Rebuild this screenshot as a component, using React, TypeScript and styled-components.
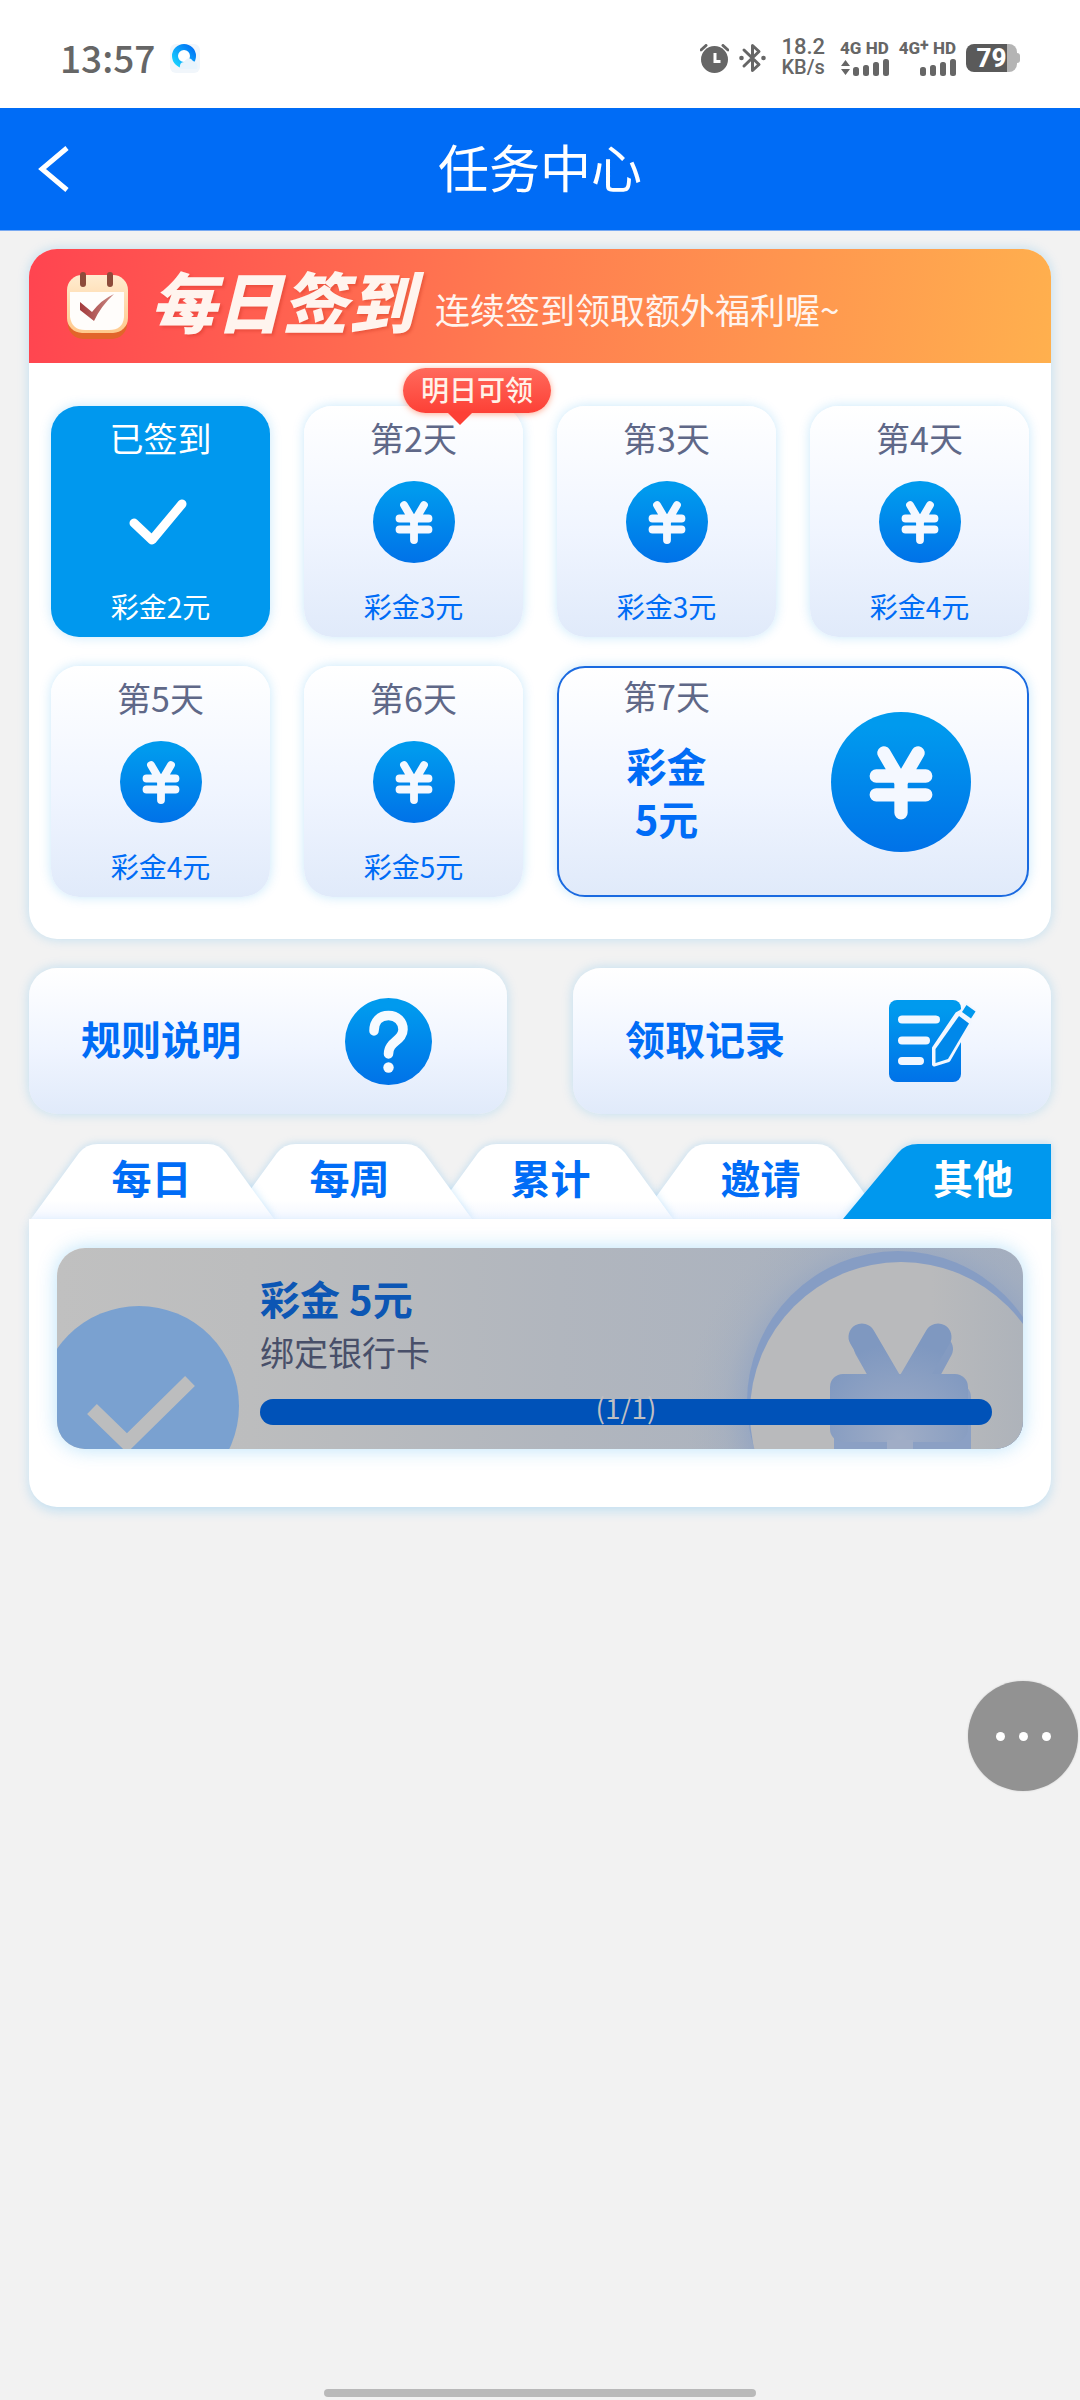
import React from "react";
import styled, { createGlobalStyle } from "styled-components";

const GlobalStyle = createGlobalStyle`
  * { box-sizing: border-box; }
  body {
    margin: 0;
    background: #f2f2f2;
    font-family: "Noto Sans CJK SC", "Noto Sans", sans-serif;
  }
  button {
    margin: 0;
    padding: 0;
    border: 0;
    background: none;
    font: inherit;
    color: inherit;
    cursor: pointer;
  }
  ul { list-style: none; margin: 0; padding: 0; }
  h1, h2, p { margin: 0; font-weight: 400; }
  svg { display: block; flex: none; }
`;

const BLUE = "#006cf6";
const SKY = "#0098ee";
const GLOW = "0 0 12px rgba(0, 152, 238, 0.22)";
const SOFT_FILL = "linear-gradient(180deg, #ffffff 0%, #f0f5ff 55%, #e0eafa 100%)";

const Page = styled.div`
  min-height: 100vh;
  display: flex;
  flex-direction: column;
`;

/* ---------- status bar ---------- */

const StatusBar = styled.div`
  height: 108px;
  padding: 8px 63px 0 60px;
  display: flex;
  align-items: center;
  justify-content: space-between;
  background: #ffffff;
  color: #666666;
`;

const StatusGroup = styled.div<{ $gap: number }>`
  display: flex;
  align-items: center;
  gap: ${(p) => p.$gap}px;
`;

const Clock = styled.span`
  font-size: 37px;
  line-height: 40px;
  padding-bottom: 2px;
  font-weight: 500;
`;

const Speed = styled.span`
  display: flex;
  flex-direction: column;
  padding: 0 5px 2px 5px;
  font-family: Roboto, "Noto Sans", sans-serif;
  font-size: 20px;
  line-height: 20px;
  font-weight: 500;
`;

const SpeedValue = styled.span`
  font-size: 22px;
`;

const Network = styled.span`
  display: flex;
  flex-direction: column;
  align-items: flex-end;
  gap: 2px;
  padding-bottom: 2px;
  font-family: Roboto, "Noto Sans", sans-serif;
  font-size: 17px;
  line-height: 18px;
  font-weight: 800;
`;

const Plus = styled.sup`
  font-size: 16px;
  line-height: 0;
  vertical-align: 4px;
`;

const Battery = styled.span`
  position: relative;
  display: flex;
  align-items: center;
  justify-content: center;
  width: 51px;
  height: 28px;
  border-radius: 8px;
  background: linear-gradient(90deg, #5a5a5a 0 80%, #b4b4b4 80%);
  color: #ffffff;
  font-family: Roboto, "Noto Sans", sans-serif;
  font-size: 26px;
  line-height: 28px;
  font-weight: 800;

  &::after {
    content: "";
    position: absolute;
    right: -3px;
    top: 9px;
    width: 4px;
    height: 10px;
    border-radius: 0 3px 3px 0;
    background: #b4b4b4;
  }
`;

/* ---------- header ---------- */

const Header = styled.header`
  height: 123px;
  padding: 0 36px;
  display: grid;
  grid-template-columns: 1fr auto 1fr;
  align-items: center;
  border-bottom: 1px solid #78a9f2;
  background: ${BLUE};
  color: #ffffff;
`;

const BackButton = styled.button`
  justify-self: start;
`;

const Title = styled.h1`
  font-size: 51px;
  line-height: 116px;
  padding-bottom: 6px;
`;

/* ---------- content ---------- */

const Main = styled.main`
  display: flex;
  flex-direction: column;
  gap: 29px;
  padding: 18px 29px;
`;

const Card = styled.section`
  border-radius: 28px;
  background: #ffffff;
  box-shadow: ${GLOW};
`;

const Banner = styled.div`
  display: flex;
  align-items: flex-end;
  padding: 10px 38px 24px;
  border-radius: 28px 28px 0 0;
  background: linear-gradient(98deg, #ff4450 0%, #ff7c50 48%, #ffb04e 100%);
  color: #fff4ee;
`;

const BannerTitle = styled.h2`
  margin: 0 21px 0 22px;
  font-size: 66px;
  line-height: 80px;
  font-weight: 900;
  font-style: italic;
  text-shadow: 2px 2px 3px rgba(190, 40, 20, 0.3);
  white-space: nowrap;
`;

const BannerText = styled.p`
  font-size: 35px;
  line-height: 60px;
  white-space: nowrap;
`;

const DayGrid = styled.ul`
  && {
    display: grid;
    grid-template-columns: repeat(4, minmax(0, 1fr));
    gap: 29px 34px;
    padding: 43px 22px 42px;
  }
`;

const DayTile = styled.li<{ $done?: boolean }>`
  position: relative;
  display: flex;
  flex-direction: column;
  align-items: center;
  gap: 22px;
  padding: 11px 0 10px;
  border-radius: 28px;
  background: ${(p) => (p.$done ? SKY : SOFT_FILL)};
  box-shadow: ${GLOW};
  color: ${(p) => (p.$done ? "#ffffff" : BLUE)};
`;

const DayLabel = styled.span<{ $done?: boolean }>`
  font-size: 34px;
  line-height: 42px;
  color: ${(p) => (p.$done ? "#ffffff" : "#5f6888")};
`;

const DayReward = styled.span`
  font-size: 28px;
  line-height: 42px;
`;

const FinalTile = styled.li`
  grid-column: span 2;
  display: grid;
  grid-template-columns: 215px 1fr;
  border: 2px solid #1a6ae0;
  border-radius: 28px;
  background: ${SOFT_FILL};
  box-shadow: ${GLOW};
`;

const FinalText = styled.div`
  display: flex;
  flex-direction: column;
  align-items: center;
  gap: 22px;
  padding-top: 7px;
`;

const FinalReward = styled.span`
  display: flex;
  flex-direction: column;
  align-items: center;
  font-size: 40px;
  line-height: 53px;
  font-weight: 700;
  color: ${BLUE};
`;

const FinalCoin = styled.div`
  display: flex;
  align-items: center;
  justify-content: center;
`;

const Bubble = styled.span`
  position: absolute;
  top: -38px;
  right: -28px;
  padding: 0 18px 3px;
  border-radius: 23px;
  background: linear-gradient(180deg, #ff6a5c, #fd4036);
  box-shadow: 0 1px 6px rgba(255, 90, 40, 0.5);
  color: #fff2e8;
  font-size: 28px;
  line-height: 42px;
  font-weight: 500;
  white-space: nowrap;

  &::after {
    content: "";
    position: absolute;
    left: 44px;
    top: 44px;
    border: 13px solid transparent;
    border-top-color: #fd4036;
    border-bottom-width: 0;
  }
`;

const Actions = styled.div`
  display: grid;
  grid-template-columns: 1fr 1fr;
  gap: 66px;
`;

const ActionButton = styled.button`
  height: 146px;
  display: flex;
  align-items: center;
  justify-content: space-between;
  padding: 0 75px 0 52px;
  border-radius: 28px;
  background: ${SOFT_FILL};
  box-shadow: ${GLOW};
  color: ${BLUE};
  font-size: 40px;
  line-height: 48px;
  font-weight: 700;
`;

const ActionLabel = styled.span`
  padding-bottom: 6px;
`;

/* ---------- tabs ---------- */

const TaskSection = styled.section`
  display: flex;
  flex-direction: column;
  padding-top: 1px;
`;

const TabList = styled.div`
  display: grid;
  grid-template-columns:
    minmax(0, 198fr) minmax(0, 201fr) minmax(0, 210fr)
    minmax(0, 205fr) minmax(0, 208fr);
`;

const Tab = styled.button<{ $order: number; $active?: boolean }>`
  position: relative;
  z-index: ${(p) => p.$order};
  width: ${(p) => (p.$active ? "100%" : "245px")};
  height: 75px;
  padding: 0 0 9px ${(p) => (p.$active ? 52 : 0)}px;
  font-size: 40px;
  line-height: 64px;
  font-weight: 700;
  text-align: center;
  white-space: nowrap;
  color: ${(p) => (p.$active ? "#ffffff" : BLUE)};
`;

const TabShape = styled.svg`
  position: absolute;
  inset: 0;
  width: 100%;
  height: 100%;
  z-index: -1;
  overflow: visible;
  filter: drop-shadow(0 0 4px rgba(0, 140, 238, 0.22));
`;

const TaskPanel = styled.div`
  position: relative;
  z-index: 8;
  padding: 29px 28px 58px;
  border-radius: 0 0 28px 28px;
  background: #ffffff;
  box-shadow: 0 4px 12px rgba(0, 152, 238, 0.2);
`;

const TaskCard = styled.article`
  position: relative;
  overflow: hidden;
  padding: 26px 31px 24px 203px;
  border-radius: 28px;
  background: linear-gradient(90deg, #c0c0c0 0%, #bcbdbe 20%, #b1b6be 52%, #a5afbf 100%);
`;

const TaskGlow = styled.div`
  border-radius: 28px;
  box-shadow: 0 0 20px rgba(0, 152, 238, 0.28);
`;

const DoneMark = styled.svg`
  position: absolute;
  left: 0;
  bottom: 0;
`;

const CoinArt = styled.svg`
  position: absolute;
  right: 0;
  bottom: 0;
`;

const TaskBody = styled.div`
  position: relative;
  display: flex;
  flex-direction: column;
`;

const TaskReward = styled.span`
  margin-bottom: 10px;
  font-size: 40px;
  line-height: 48px;
  font-weight: 700;
  color: #0c56b4;
`;

const TaskName = styled.span`
  margin-bottom: 27px;
  font-size: 34px;
  line-height: 40px;
  color: #484f69;
`;

const Progress = styled.div`
  height: 26px;
  border-radius: 13px;
  background: #a9b2c0;
`;

const ProgressFill = styled.div`
  height: 100%;
  border-radius: 13px;
  background: #0052b8;
  color: #bfbfc2;
  font-size: 28px;
  line-height: 16px;
  text-align: center;
`;

/* ---------- floating and system parts ---------- */

const MoreButton = styled.button`
  position: fixed;
  right: 2px;
  top: 1681px;
  width: 110px;
  height: 110px;
  display: flex;
  align-items: center;
  justify-content: center;
  gap: 14px;
  border-radius: 50%;
  background: #929292;
  box-shadow: 0 0 2px #c8c8c8;
  z-index: 20;
`;

const Dot = styled.span`
  width: 9px;
  height: 9px;
  border-radius: 50%;
  background: #ffffff;
`;

const HomeBar = styled.div`
  width: 40%;
  height: 8px;
  margin: auto auto 3px;
  border-radius: 4px;
  background: #b9b9b9;
`;

/* ---------- icons ---------- */

const BlueGradient = ({ id }: { id: string }) => (
  <defs>
    <linearGradient id={id} x1="0" y1="0" x2="0" y2="1">
      <stop offset="0.1" stopColor="#009aee" />
      <stop offset="1" stopColor="#0072e8" />
    </linearGradient>
  </defs>
);

const YuanCoin = ({ size, id }: { size: number; id: string }) => (
  <svg width={size} height={size} viewBox="0 0 82 82">
    <BlueGradient id={id} />
    <circle cx="41" cy="41" r="41" fill={`url(#${id})`} />
    <path
      d="M31 24 L41 41 L51 24 M26.500 37.500 H55.500 M26.500 48.500 H55.500 M41 41 V59"
      fill="none"
      stroke="#f4f8ff"
      strokeWidth="7.800"
      strokeLinecap="round"
      strokeLinejoin="round"
    />
  </svg>
);

const CheckIcon = () => (
  <svg width="82" height="82" viewBox="0 0 82 82">
    <path d="M14 42 L32 59 L62 23" fill="none" stroke="#fff" strokeWidth="9" strokeLinecap="round" strokeLinejoin="round" />
  </svg>
);

const QuestionIcon = () => (
  <svg width="87" height="87" viewBox="0 0 87 87">
    <BlueGradient id="question" />
    <circle cx="43.500" cy="43.500" r="43.500" fill="url(#question)" />
    <path d="M29 33 C29 23 35 17.500 43.500 17.500 C52 17.500 58 23.500 58 31.500 C58 43 43.500 43 43.500 56" fill="none" stroke="#f6faff" strokeWidth="9.500" strokeLinecap="round" />
    <circle cx="43.500" cy="69.500" r="5.200" fill="#f6faff" />
  </svg>
);

const NoteIcon = () => (
  <svg width="87" height="82" viewBox="0 0 87 82">
    <BlueGradient id="note" />
    <rect width="72" height="82" rx="8" fill="url(#note)" />
    <path d="M13 19.500 H47 M13 40.500 H37 M13 61 H31" stroke="#f2f7ff" strokeWidth="8" strokeLinecap="round" />
    <path d="M77.500 5 L86.500 11.500 L81 19 L80 24 L59.500 60 L45 64.500 V48 L68 14 L72.500 11.500Z" fill="#f2f7ff" stroke="#f2f7ff" strokeWidth="4" strokeLinejoin="round" />
    <path d="M70 16 L80 23.500 L59 59 L46.500 63 V49Z" fill="#0088ea" />
    <path d="M77.500 5 L86.500 11.500 L82 18.500 L73 12Z" fill="#0098ee" />
  </svg>
);

const CalendarIcon = () => (
  <svg width="61" height="67" viewBox="0 0 61 67">
    <defs>
      <linearGradient id="calTop" x1="0" y1="0" x2="0" y2="1">
        <stop offset="0" stopColor="#ffecd0" />
        <stop offset="1" stopColor="#ffc98c" />
      </linearGradient>
      <linearGradient id="calTick" x1="0" y1="0" x2="1" y2="0">
        <stop offset="0" stopColor="#a33a3c" />
        <stop offset="1" stopColor="#c98a84" />
      </linearGradient>
    </defs>
    <rect x="1" y="12" width="59" height="55" rx="15" fill="#e2652a" />
    <rect y="3" width="61" height="58" rx="15" fill="url(#calTop)" />
    <path d="M3 20 H57 V45 Q56 58 42 58 H18 Q5 58 3 45Z" fill="#fffdfb" />
    <path d="M16 3 V12 M43 3 V12" stroke="#8d4b3a" strokeWidth="6" strokeLinecap="round" />
    <path d="M13 30 L25 40 Q34 28 47 22 Q34 34 27 49 L13 38Z" fill="url(#calTick)" />
  </svg>
);

const BrowserIcon = () => (
  <svg width="30" height="30" viewBox="0 0 30 30">
    <defs>
      <linearGradient id="ring" x1="0" y1="1" x2="1" y2="0">
        <stop offset="0" stopColor="#18d2ff" />
        <stop offset="1" stopColor="#0072f5" />
      </linearGradient>
    </defs>
    <rect y="1" width="30" height="29" rx="6" fill="#f1f6fb" />
    <circle cx="14" cy="13" r="9" fill="#fff" stroke="url(#ring)" strokeWidth="6" />
    <path d="M10 26 Q9 19 14 19 Q19 12 23 18 Q29 19 27 26Z" fill="#e9f4fc" />
  </svg>
);

const AlarmIcon = () => (
  <svg width="29" height="29" viewBox="0 0 29 29">
    <circle cx="14.500" cy="15.500" r="13.500" fill="#666" />
    <path d="M15 9 V17.500 H20.500" fill="none" stroke="#fff" strokeWidth="3" />
    <path d="M1 6 L6 1.500 M28 6 L23 1.500" stroke="#666" strokeWidth="3" strokeLinecap="round" />
  </svg>
);

const BluetoothIcon = () => (
  <svg width="27" height="30" viewBox="0 0 27 30">
    <path d="M5 7 L20 21.500 L13.500 27.500 V2.500 L20 8.500 L5 23" fill="none" stroke="#666" strokeWidth="3" strokeLinejoin="round" strokeLinecap="round" />
    <circle cx="2.500" cy="15" r="2.300" fill="#666" />
    <circle cx="24.500" cy="15" r="2.300" fill="#666" />
  </svg>
);

const SignalIcon = ({ traffic }: { traffic?: boolean }) => (
  <svg width="48" height="17" viewBox="0 0 48 17">
    {traffic && <path d="M0 7 L4.500 1 L9 7Z M0 10 L4.500 16 L9 10Z" fill="#666" />}
    <g fill="#666">
      <rect x="12" y="8" width="6" height="9" rx="2.500" />
      <rect x="22" y="6" width="6" height="11" rx="2.500" />
      <rect x="32" y="3" width="6" height="14" rx="2.500" />
      <rect x="42" y="0" width="6" height="17" rx="2.500" />
    </g>
  </svg>
);

/* ---------- data ---------- */

const days = [
  { day: 1, reward: "彩金2元", done: true },
  { day: 2, reward: "彩金3元", hint: "明日可领" },
  { day: 3, reward: "彩金3元" },
  { day: 4, reward: "彩金4元" },
  { day: 5, reward: "彩金4元" },
  { day: 6, reward: "彩金5元" },
];

const tabs = ["每日", "每周", "累计", "邀请", "其他"];
const activeTab = 4;

const TAB_PATH = "M2 75 L50 9 Q57 0 69 0 H179 Q190 0 197 9 L245 75Z";
const LAST_TAB_PATH = "M0 75 L55 9 Q62 0 75 0 H208 V75Z";

export default function App() {
  return (
    <Page>
      <GlobalStyle />
      <StatusBar>
        <StatusGroup $gap={15}>
          <Clock>13:57</Clock>
          <BrowserIcon />
        </StatusGroup>
        <StatusGroup $gap={10}>
          <AlarmIcon />
          <BluetoothIcon />
          <Speed>
            <SpeedValue>18.2</SpeedValue>
            <span>KB/s</span>
          </Speed>
          <Network>
            <span>4G HD</span>
            <SignalIcon traffic />
          </Network>
          <Network>
            <span>
              4G<Plus>+</Plus> HD
            </span>
            <SignalIcon />
          </Network>
          <Battery>79</Battery>
        </StatusGroup>
      </StatusBar>

      <Header>
        <BackButton aria-label="返回">
          <svg width="36" height="48" viewBox="0 0 36 48">
            <path d="M31 3 L6 24 L31 45" fill="none" stroke="#fff" strokeWidth="5" />
          </svg>
        </BackButton>
        <Title>任务中心</Title>
      </Header>

      <Main>
        <Card>
          <Banner>
            <CalendarIcon />
            <BannerTitle>每日签到</BannerTitle>
            <BannerText>连续签到领取额外福利喔~</BannerText>
          </Banner>
          <DayGrid>
            {days.map((d) => (
              <DayTile key={d.day} $done={d.done}>
                <DayLabel $done={d.done}>{d.done ? "已签到" : `第${d.day}天`}</DayLabel>
                {d.done ? <CheckIcon /> : <YuanCoin size={82} id={`coin${d.day}`} />}
                <DayReward>{d.reward}</DayReward>
                {d.hint && <Bubble>{d.hint}</Bubble>}
              </DayTile>
            ))}
            <FinalTile>
              <FinalText>
                <DayLabel>第7天</DayLabel>
                <FinalReward>
                  <span>彩金</span>
                  <span>5元</span>
                </FinalReward>
              </FinalText>
              <FinalCoin>
                <YuanCoin size={140} id="coin7" />
              </FinalCoin>
            </FinalTile>
          </DayGrid>
        </Card>

        <Actions>
          <ActionButton>
            <ActionLabel>规则说明</ActionLabel>
            <QuestionIcon />
          </ActionButton>
          <ActionButton>
            <ActionLabel>领取记录</ActionLabel>
            <NoteIcon />
          </ActionButton>
        </Actions>

        <TaskSection>
          <TabList role="tablist">
            {tabs.map((name, i) => {
              const active = i === activeTab;
              return (
                <Tab
                  key={name}
                  role="tab"
                  aria-selected={active}
                  $active={active}
                  $order={active ? 7 : tabs.length - i}
                >
                  <TabShape viewBox={active ? "0 0 208 75" : "0 0 245 75"} preserveAspectRatio="none">
                    <defs>
                      <linearGradient id={`tab${i}`} x1="0" y1="0" x2="0" y2="1">
                        <stop offset="0.75" stopColor="#ffffff" />
                        <stop offset="1" stopColor="#f3f7ff" />
                      </linearGradient>
                    </defs>
                    <path d={active ? LAST_TAB_PATH : TAB_PATH} fill={active ? SKY : `url(#tab${i})`} />
                  </TabShape>
                  {name}
                </Tab>
              );
            })}
          </TabList>
          <TaskPanel role="tabpanel">
            <TaskGlow>
              <TaskCard>
                <DoneMark width="182" height="144" viewBox="0 0 182 144">
                  <circle cx="82" cy="101" r="100" fill="#7aa1d0" />
                  <path d="M35 104 L70 138 L133 76" fill="none" stroke="#bcbdbe" strokeWidth="14" />
                </DoneMark>
                <CoinArt width="420" height="201" viewBox="0 0 420 201">
                  <defs>
                    <radialGradient id="halo" gradientUnits="userSpaceOnUse" cx="297" cy="165" r="215">
                      <stop offset="0.68" stopColor="#869dc4" stopOpacity="0.6" />
                      <stop offset="0.82" stopColor="#93a5c2" stopOpacity="0.22" />
                      <stop offset="1" stopColor="#a5afbf" stopOpacity="0" />
                    </radialGradient>
                    <linearGradient id="disc" x1="0" y1="0" x2="1" y2="0">
                      <stop offset="0.6" stopColor="#b9babc" />
                      <stop offset="0.9" stopColor="#aeb3ba" />
                    </linearGradient>
                    <radialGradient id="body" gradientUnits="userSpaceOnUse" cx="297" cy="190" r="95">
                      <stop offset="0" stopColor="#a0adc6" />
                      <stop offset="1" stopColor="#7f98c0" />
                    </radialGradient>
                  </defs>
                  <rect width="420" height="201" fill="url(#halo)" />
                  <circle cx="295" cy="154" r="151" fill="#869dc4" />
                  <circle cx="298" cy="165" r="151" fill="url(#disc)" />
                  <path d="M264 100 L297 158 M337 101 L306 158" fill="none" stroke="#849bc1" strokeWidth="26" strokeLinecap="round" />
                  <rect x="231" y="136" width="137" height="84" rx="13" fill="#8ba0c4" />
                  <path d="M259 89 L297 154 L335 89" fill="none" stroke="url(#body)" strokeWidth="27" strokeLinecap="round" />
                  <rect x="227" y="126" width="138" height="68" rx="13" fill="url(#body)" />
                  <rect x="284" y="192" width="26" height="9" fill="#a0adc6" />
                </CoinArt>
                <TaskBody>
                  <TaskReward>彩金 5元</TaskReward>
                  <TaskName>绑定银行卡</TaskName>
                  <Progress role="progressbar" aria-valuemin={0} aria-valuemax={1} aria-valuenow={1}>
                    <ProgressFill>(1/1)</ProgressFill>
                  </Progress>
                </TaskBody>
              </TaskCard>
            </TaskGlow>
          </TaskPanel>
        </TaskSection>
      </Main>

      <MoreButton aria-label="更多">
        <Dot />
        <Dot />
        <Dot />
      </MoreButton>
      <HomeBar />
    </Page>
  );
}
